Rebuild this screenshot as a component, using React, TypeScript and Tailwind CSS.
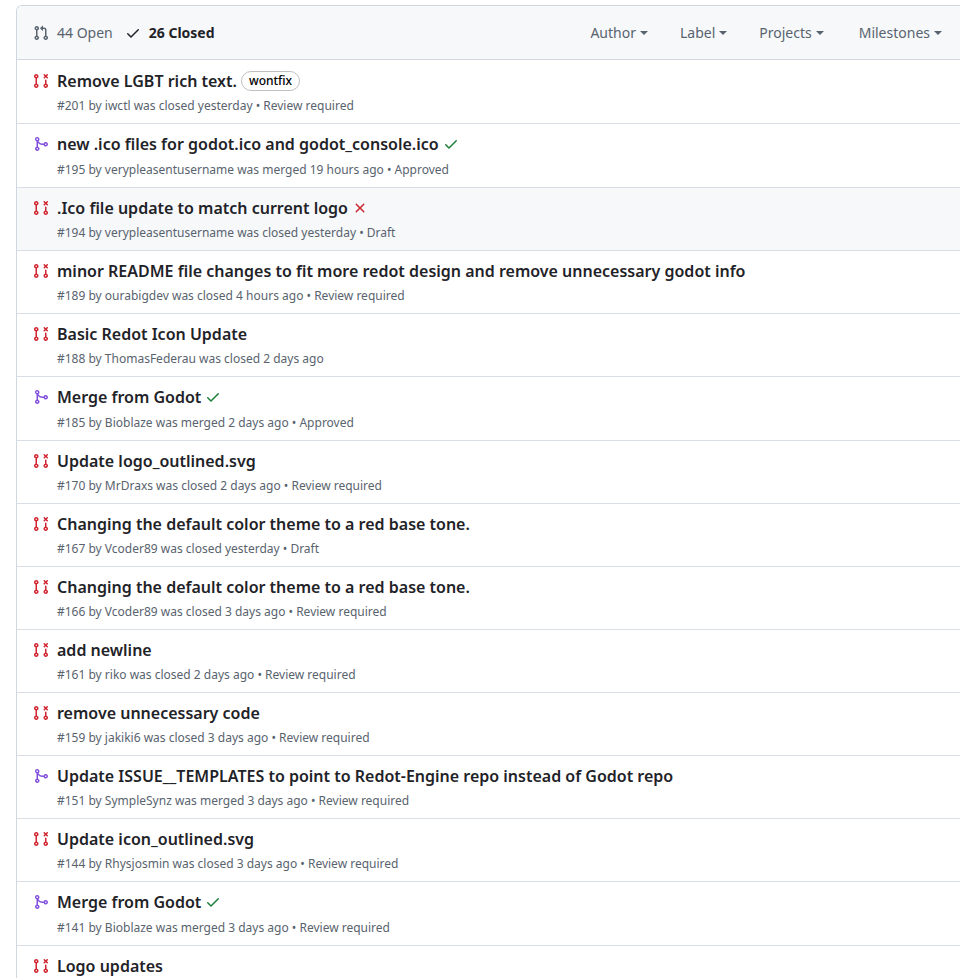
import { ReactNode } from "react";
import clsx from "clsx";

type State = "closed" | "merged";

interface PullRequest {
  id: number;
  title: string;
  author: string;
  state: State;
  when: string;
  review?: string;
  label?: string;
  checks?: "success" | "failure";
  active?: boolean;
}

const PULLS: PullRequest[] = [
  { id: 201, title: "Remove LGBT rich text.", author: "iwctl", state: "closed", when: "yesterday", review: "Review required", label: "wontfix" },
  { id: 195, title: "new .ico files for godot.ico and godot_console.ico", author: "verypleasentusername", state: "merged", when: "19 hours ago", review: "Approved", checks: "success" },
  { id: 194, title: ".Ico file update to match current logo", author: "verypleasentusername", state: "closed", when: "yesterday", review: "Draft", checks: "failure", active: true },
  { id: 189, title: "minor README file changes to fit more redot design and remove unnecessary godot info", author: "ourabigdev", state: "closed", when: "4 hours ago", review: "Review required" },
  { id: 188, title: "Basic Redot Icon Update", author: "ThomasFederau", state: "closed", when: "2 days ago" },
  { id: 185, title: "Merge from Godot", author: "Bioblaze", state: "merged", when: "2 days ago", review: "Approved", checks: "success" },
  { id: 170, title: "Update logo_outlined.svg", author: "MrDraxs", state: "closed", when: "2 days ago", review: "Review required" },
  { id: 167, title: "Changing the default color theme to a red base tone.", author: "Vcoder89", state: "closed", when: "yesterday", review: "Draft" },
  { id: 166, title: "Changing the default color theme to a red base tone.", author: "Vcoder89", state: "closed", when: "3 days ago", review: "Review required" },
  { id: 161, title: "add newline", author: "riko", state: "closed", when: "2 days ago", review: "Review required" },
  { id: 159, title: "remove unnecessary code", author: "jakiki6", state: "closed", when: "3 days ago", review: "Review required" },
  { id: 151, title: "Update ISSUE__TEMPLATES to point to Redot-Engine repo instead of Godot repo", author: "SympleSynz", state: "merged", when: "3 days ago", review: "Review required" },
  { id: 144, title: "Update icon_outlined.svg", author: "Rhysjosmin", state: "closed", when: "3 days ago", review: "Review required" },
  { id: 141, title: "Merge from Godot", author: "Bioblaze", state: "merged", when: "3 days ago", review: "Review required", checks: "success" },
];

const FILTERS = ["Author", "Label", "Projects", "Milestones"];

const ICONS = {
  open: "M1.5 3.25a2.25 2.25 0 1 1 3 2.122v5.256a2.251 2.251 0 1 1-1.5 0V5.372A2.25 2.25 0 0 1 1.5 3.25Zm5.677-.177L9.573.677A.25.25 0 0 1 10 .854V2.5h1A2.5 2.5 0 0 1 13.5 5v5.628a2.251 2.251 0 1 1-1.5 0V5a1 1 0 0 0-1-1h-1v1.646a.25.25 0 0 1-.427.177L7.177 3.427a.25.25 0 0 1 0-.354ZM3.75 2.5a.75.75 0 1 0 0 1.5.75.75 0 0 0 0-1.5Zm0 9.5a.75.75 0 1 0 0 1.5.75.75 0 0 0 0-1.5Zm8.25.75a.75.75 0 1 0 1.5 0 .75.75 0 0 0-1.5 0Z",
  closed: "M3.25 1A2.25 2.25 0 0 1 4 5.372v5.256a2.251 2.251 0 1 1-1.5 0V5.372A2.251 2.251 0 0 1 3.25 1Zm9.5 5.5a.75.75 0 0 1 .75.75v3.378a2.251 2.251 0 1 1-1.5 0V7.25a.75.75 0 0 1 .75-.75Zm-2.03-5.273a.75.75 0 0 1 1.06 0l.97.97.97-.97a.748.748 0 0 1 1.265.332.75.75 0 0 1-.205.729l-.97.97.97.97a.751.751 0 0 1-.018 1.042.751.751 0 0 1-1.042.018l-.97-.97-.97.97a.749.749 0 0 1-1.275-.326.749.749 0 0 1 .215-.734l.97-.97-.97-.97a.75.75 0 0 1 0-1.06ZM2.5 3.25a.75.75 0 1 0 1.5 0 .75.75 0 0 0-1.5 0ZM3.25 12a.75.75 0 1 0 0 1.5.75.75 0 0 0 0-1.5Zm9.5 0a.75.75 0 1 0 0 1.5.75.75 0 0 0 0-1.5Z",
  merged: "M5.45 5.154A4.25 4.25 0 0 0 9.25 7.5h1.378a2.251 2.251 0 1 1 0 1.5H9.25A5.734 5.734 0 0 1 5 7.123v3.505a2.25 2.25 0 1 1-1.5 0V5.372a2.25 2.25 0 1 1 1.95-.218ZM4.25 13.5a.75.75 0 1 0 0-1.5.75.75 0 0 0 0 1.5Zm8.5-4.5a.75.75 0 1 0 0-1.5.75.75 0 0 0 0 1.5ZM5 3.25a.75.75 0 1 0 0 .005V3.25Z",
  check: "M13.78 4.22a.75.75 0 0 1 0 1.06l-7.25 7.25a.75.75 0 0 1-1.06 0L2.22 9.28a.751.751 0 0 1 .018-1.042.751.751 0 0 1 1.042-.018L6 10.94l6.72-6.72a.75.75 0 0 1 1.06 0Z",
  x: "M3.72 3.72a.75.75 0 0 1 1.06 0L8 6.94l3.22-3.22a.749.749 0 0 1 1.275.326.749.749 0 0 1-.215.734L9.06 8l3.22 3.22a.749.749 0 0 1-.326 1.275.749.749 0 0 1-.734-.215L8 9.06l-3.22 3.22a.751.751 0 0 1-1.042-.018.751.751 0 0 1-.018-1.042L6.94 8 3.72 4.78a.75.75 0 0 1 0-1.06Z",
};

function Icon({ name, className }: { name: keyof typeof ICONS; className?: string }) {
  return (
    <svg viewBox="0 0 16 16" width={16} height={16} fill="currentColor" className={clsx("shrink-0", className)} aria-hidden="true">
      <path d={ICONS[name]} />
    </svg>
  );
}

function Row({ state, title, active, extra, meta }: { state: State; title: string; active?: boolean; extra?: ReactNode; meta?: string }) {
  return (
    <li className={clsx("flex border-t border-[#d8dee4] pl-4 first:border-transparent", active && "bg-[#f6f8fa]")}>
      <Icon name={state} className={clsx("mt-3", state === "merged" ? "text-[#8250df]" : "text-[#d1242f]")} />
      <div className="min-w-0 flex-1 p-2">
        <div className="flex items-start">
          <a href="#" className="text-base leading-6 font-semibold text-[#1f2328] hover:text-[#0969da]">
            {title}
          </a>
          {extra}
        </div>
        {meta && <div className="mt-1 text-xs leading-[18px] text-[#59636e]">{meta}</div>}
      </div>
    </li>
  );
}

function PullRow({ pr }: { pr: PullRequest }) {
  const meta = `#${pr.id} by ${pr.author} was ${pr.state} ${pr.when}${pr.review ? ` • ${pr.review}` : ""}`;

  return (
    <Row
      state={pr.state}
      title={pr.title}
      active={pr.active}
      meta={meta}
      extra={
        <>
          {pr.label && (
            <a href="#" className="mt-0.5 ml-1 rounded-full border border-[#bfbfbf] px-[7px] text-xs leading-[18px] font-medium text-black">
              {pr.label}
            </a>
          )}
          {pr.checks === "success" && (
            <a href="#" aria-label="Checks passed" className="mb-px ml-1 flex h-6 items-center text-[#1a7f37]">
              <Icon name="check" />
            </a>
          )}
          {pr.checks === "failure" && (
            <a href="#" aria-label="Checks failed" className="ml-1 flex h-6 items-center text-[#d1242f]">
              <Icon name="x" />
            </a>
          )}
        </>
      }
    />
  );
}

export default function App() {
  return (
    <main className="h-screen overflow-hidden bg-white pt-[5px] pl-4 font-['Noto_Sans',sans-serif] text-sm text-[#1f2328]">
      <div className="overflow-hidden rounded-tl-md border-t border-l border-[#d0d7de]">
        <div className="flex items-center justify-between border-b border-[#d0d7de] bg-[#f6f8fa] py-4 pr-[18px] pl-4 leading-[21px]">
          <div className="flex items-center gap-3">
            <a href="#" className="flex items-center gap-2 text-[#59636e]">
              <Icon name="open" />
              44 Open
            </a>
            <a href="#" className="flex items-center gap-2 font-bold">
              <Icon name="check" />
              26 Closed
            </a>
          </div>
          <div className="flex items-center gap-8">
            {FILTERS.map(filter => (
              <button key={filter} type="button" className="flex items-center gap-1 text-[#59636e] last:ml-[3px]">
                {filter}
                <span className="border-x-4 border-t-4 border-x-transparent border-t-current" />
              </button>
            ))}
          </div>
        </div>

        <ul>
          {PULLS.map(pr => (
            <PullRow key={pr.id} pr={pr} />
          ))}
          <Row state="closed" title="Logo updates" />
        </ul>
      </div>
    </main>
  );
}
